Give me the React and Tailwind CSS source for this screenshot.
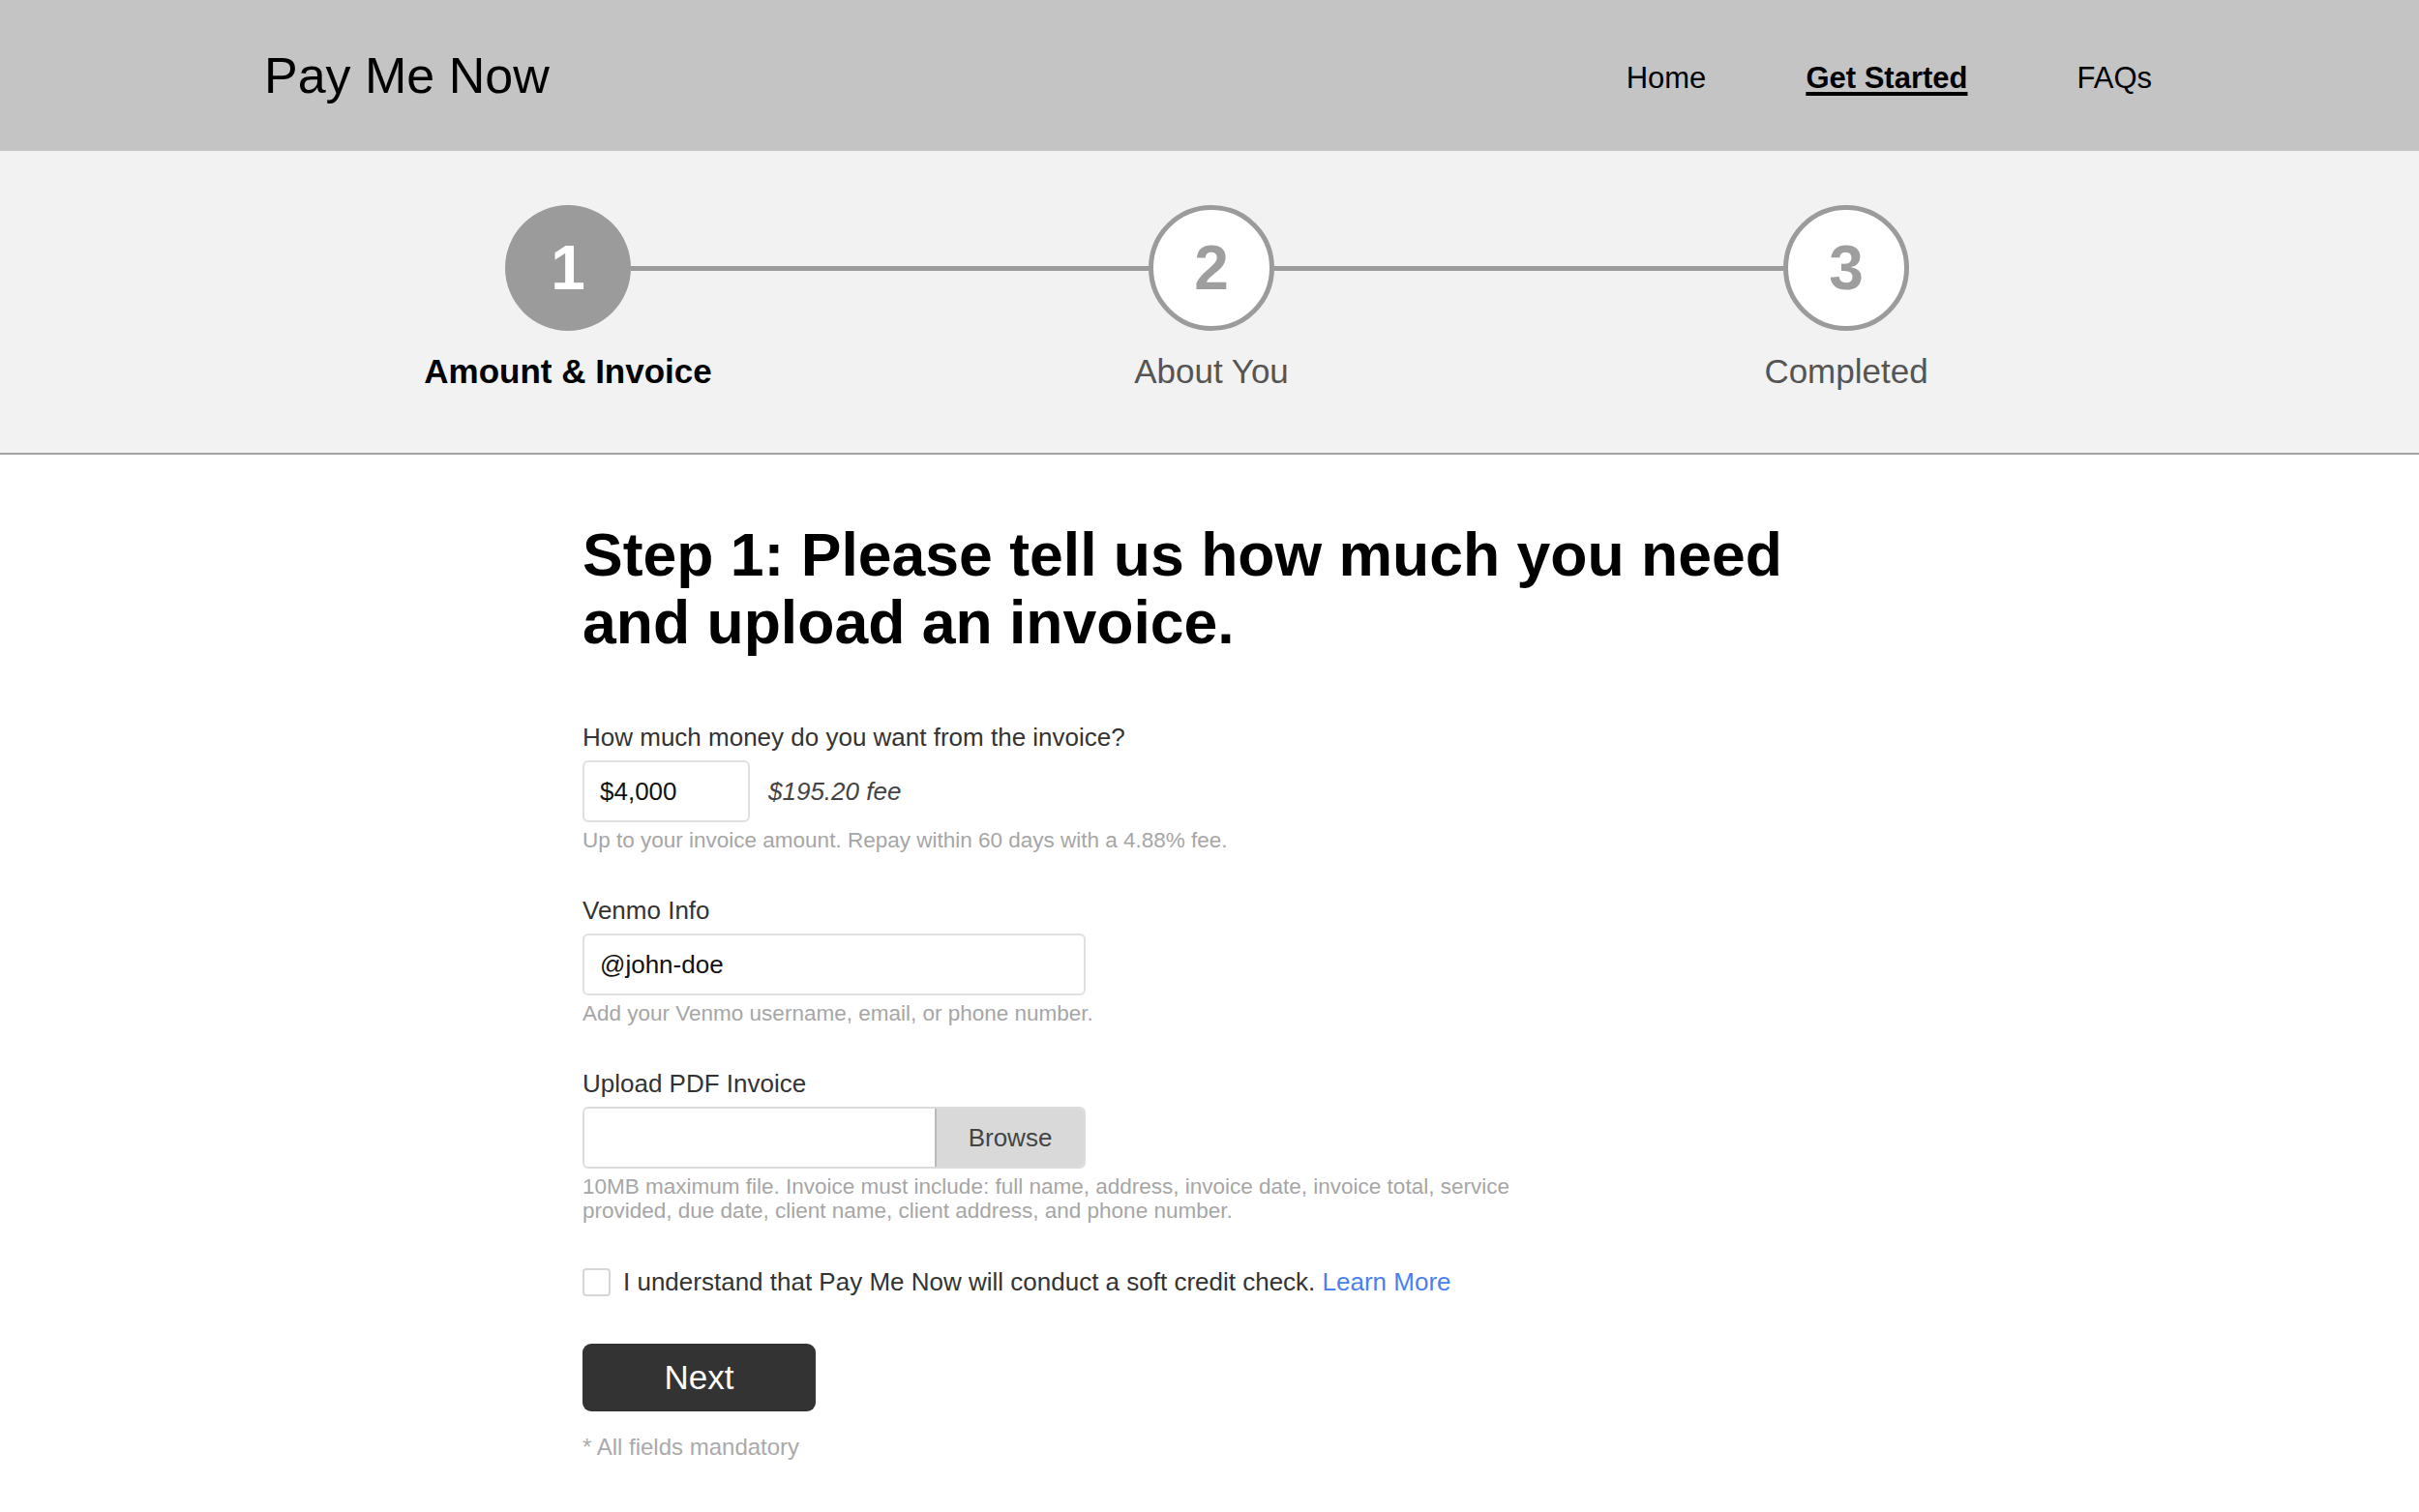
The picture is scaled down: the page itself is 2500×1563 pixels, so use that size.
import React from 'react';

const steps = [
  { num: '1', label: 'Amount & Invoice', active: true },
  { num: '2', label: 'About You', active: false },
  { num: '3', label: 'Completed', active: false }
];

function Header() {
  return (
    <header className="h-[156px] bg-[#c4c4c4] flex items-center justify-between pl-[273px] pr-[276px]">
      <div className="text-[52px] text-black leading-none">Pay Me Now</div>
      <nav className="flex items-center pt-[6px] text-[31px] text-black">
        <a className="cursor-pointer">Home</a>
        <a className="ml-[103px] cursor-pointer font-bold underline underline-offset-[4px] decoration-[4px]">
          Get Started
        </a>
        <a className="ml-[113px] cursor-pointer">FAQs</a>
      </nav>
    </header>
  );
}

function Stepper() {
  return (
    <div className="h-[314px] bg-[#f2f2f2] border-b-2 border-[#a3a3a3] pt-[56px]">
      <div className="flex items-start pl-[522px]">
        {steps.map((step, index) => (
          <React.Fragment key={step.num}>
            {index > 0 && (
              <div
                className={
                  index === 1
                    ? 'w-[535px] h-[5px] bg-[#9b9b9b] mt-[63px]'
                    : 'w-[526px] h-[5px] bg-[#9b9b9b] mt-[63px]'
                }
              />
            )}
            <div className="w-[130px] flex flex-col items-center">
              {step.active ? (
                <div className="w-[130px] h-[130px] rounded-full bg-[#9b9b9b] flex items-center justify-center text-white font-bold text-[64px] leading-none">
                  {step.num}
                </div>
              ) : (
                <div className="w-[130px] h-[130px] rounded-full bg-white border-[5px] border-[#9b9b9b] flex items-center justify-center text-[#9e9e9e] font-bold text-[64px] leading-none">
                  {step.num}
                </div>
              )}
              <div
                className={
                  step.active
                    ? 'mt-[22px] whitespace-nowrap text-[35px] leading-[40px] font-bold text-black'
                    : 'mt-[22px] whitespace-nowrap text-[35px] leading-[40px] text-[#555555]'
                }>
                {step.label}
              </div>
            </div>
          </React.Fragment>
        ))}
      </div>
    </div>
  );
}

function Field({ label, children, help }) {
  return (
    <div className="flex flex-col">
      <label className="text-[26px] leading-[36px] text-[#333333]">{label}</label>
      <div className="mt-[6px]">{children}</div>
      <p className="mt-[6px] text-[22.5px] leading-[25px] text-[#a6a6a6]">{help}</p>
    </div>
  );
}

export default function App() {
  const [agreed, setAgreed] = React.useState(false);

  return (
    <div className="min-h-[1563px] bg-white font-['Liberation_Sans',Arial,sans-serif]">
      <Header />
      <Stepper />

      <main className="pl-[602px] pt-[68px] pb-[40px]">
        <h1 className="w-[1300px] text-[62.5px] leading-[70px] font-bold text-black">
          Step 1: Please tell us how much you need and upload an invoice.
        </h1>

        <div className="mt-[66px] flex flex-col gap-[42px]">
          <Field
            label="How much money do you want from the invoice?"
            help="Up to your invoice amount. Repay within 60 days with a 4.88% fee.">
            <div className="flex items-center">
              <input
                defaultValue="$4,000"
                className="w-[173px] h-[64px] px-[16px] border-2 border-[#e0e0e0] rounded-[6px] text-[26px] text-[#111111] outline-none"
              />
              <span className="ml-[19px] text-[26px] italic text-[#444444]">$195.20 fee</span>
            </div>
          </Field>

          <Field label="Venmo Info" help="Add your Venmo username, email, or phone number.">
            <input
              defaultValue="@john-doe"
              className="w-[520px] h-[64px] px-[16px] border-2 border-[#e0e0e0] rounded-[6px] text-[26px] text-[#111111] outline-none"
            />
          </Field>

          <Field
            label="Upload PDF Invoice"
            help={
              <span className="block w-[1010px]">
                10MB maximum file. Invoice must include: full name, address, invoice date, invoice
                total, service provided, due date, client name, client address, and phone number.
              </span>
            }>
            <div className="flex w-[520px] h-[64px] border-2 border-[#dcdcdc] rounded-[6px] overflow-hidden">
              <div className="flex-1 bg-white" />
              <button className="w-[154px] h-full bg-[#d9d9d9] border-l-2 border-[#bababa] text-[26px] text-[#444444]">
                Browse
              </button>
            </div>
          </Field>
        </div>

        <label className="mt-[43px] flex items-center gap-[13px] cursor-pointer">
          <input
            type="checkbox"
            checked={agreed}
            onChange={() => setAgreed(!agreed)}
            className="appearance-none w-[29px] h-[29px] border-2 border-[#d6d6d6] rounded-[4px] bg-white"
          />
          <span className="text-[26px] leading-[36px] text-[#333333]">
            I understand that Pay Me Now will conduct a soft credit check.{' '}
            <a className="text-[#4a7ff0]">Learn More</a>
          </span>
        </label>

        <button className="mt-[46px] w-[241px] h-[70px] rounded-[9px] bg-[#333333] text-white text-[35px]">
          Next
        </button>

        <p className="mt-[23px] text-[24px] leading-[28px] text-[#aaaaaa]">* All fields mandatory</p>
      </main>
    </div>
  );
}
